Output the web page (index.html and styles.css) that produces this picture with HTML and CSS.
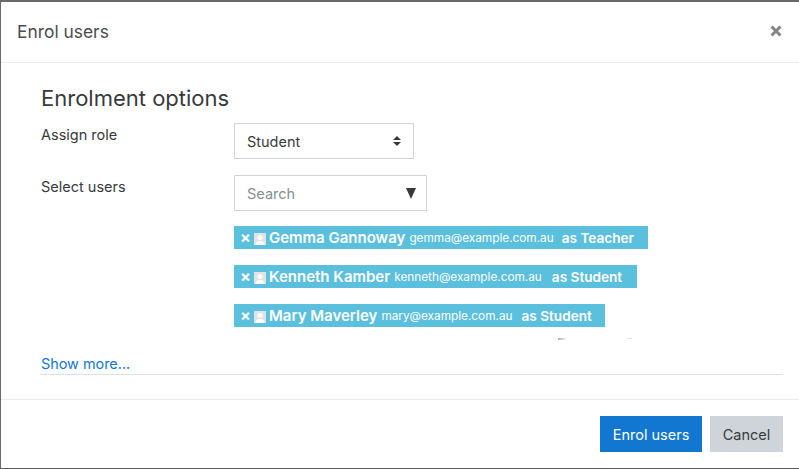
FILE: index.html
```html
<!DOCTYPE html>
<html lang="en">
<head>
<meta charset="utf-8">
<title>Enrol users</title>
<link rel="stylesheet" href="styles.css">
</head>
<body>
<div class="modal">
  <header class="modal-header">
    <h1 class="modal-title">Enrol users</h1>
    <svg class="close" viewBox="0 0 12 12" width="12" height="12" aria-label="Close"><path d="M1.5 1.5L10.5 10.5M10.5 1.5L1.5 10.5" stroke="#858585" stroke-width="3" fill="none"/></svg>
  </header>
  <main class="modal-body">
    <h2 class="section-title">Enrolment options</h2>
    <div class="form-row row-role">
      <label class="form-label">Assign role</label>
      <div class="select">
        <span>Student</span>
        <svg class="updown" viewBox="0 0 8 10" width="8" height="10"><path d="M4 0L8 4H0ZM4 10L0 6H8Z" fill="#373a3c"/></svg>
      </div>
    </div>
    <div class="form-row row-users">
      <label class="form-label">Select users</label>
      <div class="field">
        <div class="search">
          <span class="placeholder">Search</span>
          <svg class="down" viewBox="0 0 10 11" width="10" height="11"><path d="M0 0H10L5 11Z" fill="#373a3c"/></svg>
        </div>
        <ul class="tags">
          <li class="tag tag-a"><span class="x">×</span><svg class="avatar" viewBox="0 0 12 12" width="12" height="12"><rect width="12" height="12" fill="#e3e3e3"/><circle cx="6" cy="4.6" r="2.5" fill="#fff"/><path d="M1.5 12C2 8.5 4 8 6 8s4 .5 4.5 4Z" fill="#fff"/></svg><b class="name">Gemma Gannoway</b><span class="mail">gemma@example.com.au</span><b class="role">as Teacher</b></li>
          <li class="tag tag-b"><span class="x">×</span><svg class="avatar" viewBox="0 0 12 12" width="12" height="12"><rect width="12" height="12" fill="#e3e3e3"/><circle cx="6" cy="4.6" r="2.5" fill="#fff"/><path d="M1.5 12C2 8.5 4 8 6 8s4 .5 4.5 4Z" fill="#fff"/></svg><b class="name">Kenneth Kamber</b><span class="mail">kenneth@example.com.au</span><b class="role">as Student</b></li>
          <li class="tag tag-c"><span class="x">×</span><svg class="avatar" viewBox="0 0 12 12" width="12" height="12"><rect width="12" height="12" fill="#e3e3e3"/><circle cx="6" cy="4.6" r="2.5" fill="#fff"/><path d="M1.5 12C2 8.5 4 8 6 8s4 .5 4.5 4Z" fill="#fff"/></svg><b class="name">Mary Maverley</b><span class="mail">mary@example.com.au</span><b class="role">as Student</b></li>
        </ul>
      </div>
    </div>
    <div class="more"><a class="more-link">Show more...</a></div>
  </main>
  <footer class="modal-footer">
    <button class="btn btn-primary">Enrol users</button>
    <button class="btn btn-secondary">Cancel</button>
  </footer>
</div>
</body>
</html>
```
FILE: styles.css
```css
* { box-sizing: border-box; }
html, body { margin: 0; padding: 0; background: #fff; }
body {
  width: 799px;
  height: 469px;
  overflow: hidden;
  font-family: Inter, Roboto, "Liberation Sans", sans-serif;
  color: #373a3c;
}
.modal {
  width: 799px;
  height: 469px;
  background: #fff;
  border-top: 2px solid #6a6a6a;
  border-left: 1px solid #6a6a6a;
  border-bottom: 1px solid #5a5a5a;
  display: flex;
  flex-direction: column;
}
.modal-header {
  height: 61px;
  flex: none;
  border-bottom: 1px solid #e9ecef;
  display: flex;
  align-items: center;
  justify-content: space-between;
  padding: 0 17px 1px 16px;
}
.modal-title {
  margin: 0;
  font-size: 17.4px;
  font-weight: 400;
  color: #4a4d4f;
}
.close { display: block; margin-top: -2px; }
.modal-body {
  flex: none;
  height: 337px;
  padding: 22px 16px 0 40px;
  border-bottom: 1px solid #e9ecef;
}
.section-title {
  margin: 0;
  height: 38px;
  font-size: 22px;
  line-height: 26px;
  font-weight: 400;
  color: #373a3c;
}
.form-row {
  display: grid;
  grid-template-columns: 193px 1fr;
}
.row-role { height: 52px; }
.form-label {
  font-size: 14.5px;
  line-height: 20px;
  padding-top: 2px;
  color: #373a3c;
}
.select, .search {
  height: 36px;
  background: #fff;
  border: 1px solid #ced4da;
  display: flex;
  align-items: center;
  justify-content: space-between;
  font-size: 14.5px;
}
.select { width: 180px; padding: 0 12px 0 12px; }
.search { width: 193px; padding: 0 10px 0 12px; }
.placeholder { color: #868e96; }
.updown, .down { display: block; }
.down { margin-top: 1px; }
.tags {
  position: relative;
  list-style: none;
  margin: 15px 0 0;
  padding: 0;
  display: flex;
  flex-direction: column;
  align-items: flex-start;
  gap: 16px;
}
.tags::before, .tags::after {
  content: "";
  position: absolute;
  top: 112px;
}
.tags::before {
  left: 324px;
  width: 9px;
  height: 2px;
  background: linear-gradient(to right, #aaa, #fff);
}
.tags::after {
  left: 393px;
  width: 5px;
  height: 1px;
  background: #e2e2e2;
}
.tag {
  height: 23px;
  background: #5bc0de;
  color: #fff;
  display: flex;
  align-items: center;
  padding-left: 6px;
  white-space: nowrap;
}
.tag-a { width: 414px; }
.tag-b { width: 403px; }
.tag-c { width: 371px; }
.x { font-size: 16px; font-weight: 700; width: 14px; margin-top: -2px; }
.avatar { display: block; margin-right: 3px; margin-top: 2px; flex: none; }
.name { font-size: 15px; font-weight: 600; }
.mail { font-size: 11.8px; margin-left: 4px; }
.role { font-size: 13.6px; font-weight: 600; margin-left: 8px; }
.tag-b .role { margin-left: 10px; }
.tag-c .role { margin-left: 9px; }
.more {
  margin-top: 26px;
  height: 22px;
  border-bottom: 1px solid #dee2e6;
}
.more-link { font-size: 14.4px; line-height: 20px; color: #1177d1; }
.modal-footer {
  flex: 1;
  display: flex;
  justify-content: flex-end;
  align-items: flex-start;
  gap: 8px;
  padding: 16px 16px 0 0;
}
.btn {
  height: 36px;
  border: 0;
  font: inherit;
  font-size: 14.5px;
  padding: 0;
}
.btn-primary { width: 102px; background: #1177d1; color: #fff; }
.btn-secondary { width: 73px; background: #ced4da; color: #373a3c; }
```
